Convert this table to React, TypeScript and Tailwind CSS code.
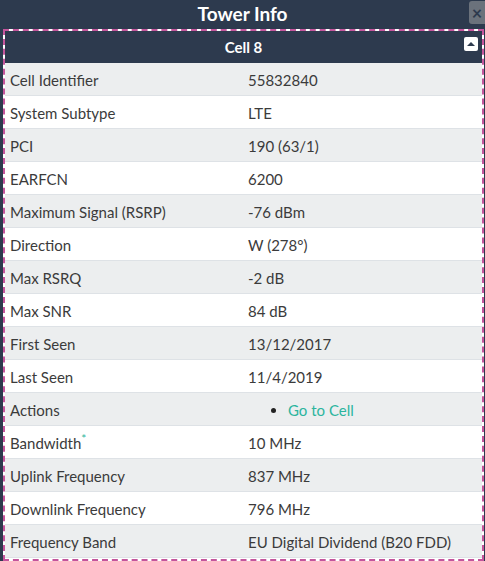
import React from "react";

const rows: [string, React.ReactNode][] = [
  ["Cell Identifier", "55832840"],
  ["System Subtype", "LTE"],
  ["PCI", "190 (63/1)"],
  ["EARFCN", "6200"],
  ["Maximum Signal (RSRP)", "-76 dBm"],
  ["Direction", "W (278°)"],
  ["Max RSRQ", "-2 dB"],
  ["Max SNR", "84 dB"],
  ["First Seen", "13/12/2017"],
  ["Last Seen", "11/4/2019"],
  ["Actions", "ACTIONS"],
  ["Bandwidth", "10 MHz"],
  ["Uplink Frequency", "837 MHz"],
  ["Downlink Frequency", "796 MHz"],
  ["Frequency Band", "EU Digital Dividend (B20 FDD)"],
];

export default function App() {
  return (
    <div
      className="relative w-[485px] h-[561px] overflow-hidden bg-[#2d3a4e]"
      style={{ fontFamily: "Lato, 'Open Sans', sans-serif" }}
    >
      <div className="h-[29px] flex items-center justify-center text-white font-bold text-[19px]">
        Tower Info
      </div>
      <div className="absolute right-0 top-[1px] w-[16px] h-[23px] bg-[#6b727c] rounded-l-[3px] flex items-center justify-center text-[#2d3a4e] font-bold text-[18px] leading-none">
        ×
      </div>
      <div className="ml-[3px] w-[481px] h-[532px] border-2 border-dashed border-[#c4559c] bg-white">
        <div className="relative h-[32px] bg-[#2d3a4e] flex items-center justify-center text-white font-bold text-[15px]">
          Cell 8
          <div className="absolute right-[4px] top-[6px] w-[14px] h-[14px] bg-white rounded-[2px] flex items-center justify-center">
            <div className="w-0 h-0 border-l-[4px] border-r-[4px] border-b-[4px] border-l-transparent border-r-transparent border-b-[#2d3a4e]" />
          </div>
        </div>
        {rows.map(([label, value], i) => (
          <div
            key={label}
            className={`flex h-[33px] items-center pt-[2px] border-b border-[#dee2e6] text-[15px] text-[#3b3b3b] ${
              i % 2 === 0 ? "bg-[#eceeef]" : "bg-white"
            }`}
          >
            <div className="w-[243px] pl-[5px] shrink-0">
              {label}
              {label === "Bandwidth" && (
                <sup className="text-[#2bb59e] text-[12px]">*</sup>
              )}
            </div>
            <div className="flex-1">
              {value === "ACTIONS" ? (
                <ul className="list-disc pl-[40px]">
                  <li className="marker:text-[#222]">
                    <span className="text-[#2bb59e]">Go to Cell</span>
                  </li>
                </ul>
              ) : (
                value
              )}
            </div>
          </div>
        ))}
      </div>
    </div>
  );
}
